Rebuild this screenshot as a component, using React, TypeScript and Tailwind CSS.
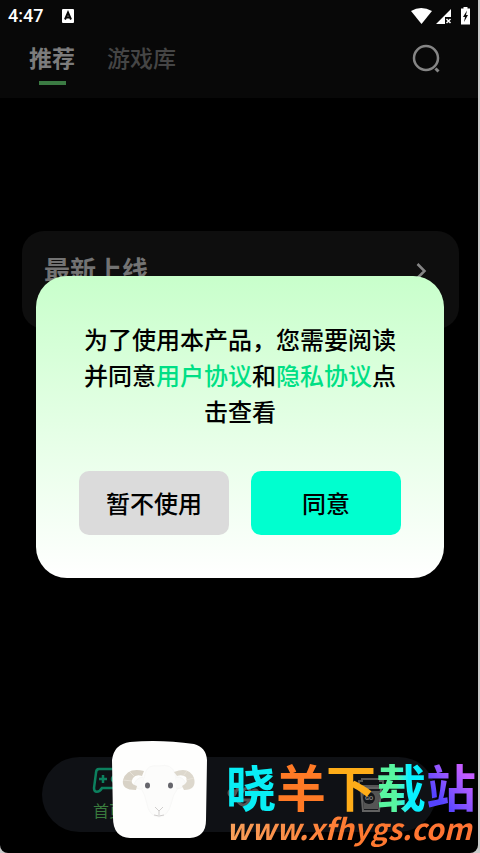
import React from "react";

const cjk = "font-['Noto_Sans_CJK_SC',sans-serif]";

function StatusBar() {
  return (
    <div className="flex h-8 items-center justify-between pr-2 pl-2">
      <div className="flex items-center gap-4">
        <span className="font-['Roboto',sans-serif] text-lg leading-8 font-medium text-white">4:47</span>
        <svg width="16" height="14" viewBox="0 0 16 14" aria-hidden="true">
          <rect x="3" width="12" height="14" rx="1" fill="#fff" />
          <path d="M6 10.500 9 3.500 12 10.500M7 8.500h4" stroke="#080808" strokeWidth="2" fill="none" />
        </svg>
      </div>
      <svg width="60" height="20" viewBox="0 0 60 20" aria-hidden="true">
        <path d="M1 5Q11-1 22 5L11.500 18Z" fill="#fff" />
        <path d="M26 18 41 3V11H35V18Z" fill="#fff" />
        <path d="m36.500 13 4 4m0-4-4 4" stroke="#fff" strokeWidth="1.500" />
        <path d="M51 2.500H53.500V1h4v1.500H60V18.500H51Z" fill="#fff" />
        <path d="M57 4.500 53 11H55l-1 5 4-7H56Z" fill="#080808" />
      </svg>
    </div>
  );
}

function Header() {
  return (
    <header className="h-[98px] bg-[#080808]">
      <StatusBar />
      <div className="flex items-start justify-between pt-2 pr-9 pl-[29px]">
        <nav className="flex gap-8 text-[23px] leading-[34px]">
          <button className="flex flex-col items-center font-bold text-[#7c7c7c]">
            推荐
            <span className="mt-[7px] h-1 w-[27px] bg-[#3b7b43]" />
          </button>
          <button className="self-start font-medium text-[#454545]">游戏库</button>
        </nav>
        <button aria-label="搜索" className="mt-1">
          <svg width="30" height="30" viewBox="0 0 30 30" fill="none" stroke="#858585" aria-hidden="true">
            <circle cx="14" cy="14" r="12" strokeWidth="2.500" />
            <path d="m23.500 24.500 3 3" strokeWidth="3" />
          </svg>
        </button>
      </div>
    </header>
  );
}

function LatestCard() {
  return (
    <section className="mt-[133px] mr-[19px] ml-[22px] flex h-[98px] items-start justify-between rounded-[22px] bg-[#0e0e0e] pt-5 pr-8 pl-[22px]">
      <h2 className="text-[26px] leading-9 font-bold text-[#737373]">最新上线</h2>
      <svg className="mt-3" width="11" height="16" viewBox="0 0 11 16" fill="none" stroke="#858585" strokeWidth="2.500" aria-hidden="true">
        <path d="m1.500 1 7 7-7 7" />
      </svg>
    </section>
  );
}

function BottomNav() {
  return (
    <nav className="mx-[42px] mb-[21px] flex h-[75px] items-center justify-between rounded-full bg-[#0f1115] pr-[52px] pl-[50px]">
      <button className="flex flex-col items-center text-base leading-6 text-[#397b3d]">
        <svg width="34" height="27" viewBox="0 0 34 27" fill="none" stroke="#0c805e" strokeWidth="2.500" aria-hidden="true">
          <path d="M7 2h20c3 0 4 2 4 4l2 15c0 5-5 4-7 0H10c-3 5-8 5-8 0L4 6c0-3 1-4 3-4ZM11 8v8m-4-4h8" />
          <circle cx="23" cy="12" r="3" />
        </svg>
        <span className="pt-1">首页</span>
      </button>
      <button aria-label="游戏" className="ml-1">
        <svg width="34" height="28" viewBox="0 0 34 28" fill="none" stroke="#555" strokeWidth="3" aria-hidden="true">
          <circle cx="5" cy="12" r="3" />
          <circle cx="28" cy="12" r="3" />
          <path d="M8 13q3-9 8-3 5-7 9 3M10 19q6 10 13 0Z" />
        </svg>
      </button>
      <button aria-label="福利">
        <svg width="26" height="36" viewBox="0 0 26 36" aria-hidden="true">
          <path d="M4 4V2h18v2h3v5H1V4Z" fill="none" stroke="#555" strokeWidth="2" />
          <path d="M3 11h20l-2 23H5Z" fill="#17181c" stroke="#626262" strokeWidth="2" />
          <path d="M4 14h18l-2 18H6Z" fill="#555" />
          <circle cx="11" cy="21" r="6" fill="#14161a" />
          <text x="11" y="23" textAnchor="middle" fontFamily="Roboto" fontSize="6" fontWeight="700" fill="#888">GO</text>
        </svg>
      </button>
    </nav>
  );
}

function ConsentDialog() {
  return (
    <div className="absolute inset-0 flex items-center justify-center px-9">
      <div role="dialog" aria-modal="true" className="w-full rounded-[31px] bg-linear-to-b from-[#c8ffcb] to-white px-[43px] pt-[45px] pb-[43px] text-black">
        <p className="px-1 text-center text-2xl leading-9 font-medium">
          为了使用本产品，您需要阅读并同意<a href="#terms" className="text-[#00df85]">用户协议</a>和<a href="#privacy" className="text-[#00df85]">隐私协议</a>点击查看
        </p>
        <div className="mt-[42px] flex gap-[22px] text-2xl font-medium">
          <button className="h-16 flex-1 rounded-[10px] bg-[#dbdbdb]">暂不使用</button>
          <button className="h-16 flex-1 rounded-[10px] bg-[#00ffcf]">同意</button>
        </div>
      </div>
    </div>
  );
}

function SheepLogo() {
  return (
    <svg width="96" height="99" viewBox="0 0 96 99" aria-hidden="true">
      <path d="M18 2Q48-1 82 4 94 7 95 20L94 80Q94 97 78 98H18Q1 97 1 78L0 20Q2 4 18 2Z" fill="#fefefd" />
      <path d="M33 34Q35 24 47 26 60 23 63 34L66 48Q61 54 59 64 56 76 47 77 37 76 35 64 33 54 29 48Z" fill="#fcfcfb" stroke="#f8f8f7" />
      <path d="M31 37Q23 38 22 46 28 51 31 48M64 37Q72 36 74 45 67 50 64 48" fill="#fafaf9" stroke="#f6f6f4" />
      <path d="M32 31Q15 27 11 40 9 50 24 50L25 46Q17 44 21 38 24 34 30 36Z" fill="#d8d2c6" />
      <path d="M62 32Q77 26 82 38 85 50 72 50L70 46Q77 43 74 37 70 34 65 36Z" fill="#ddd8cd" />
      <path d="M11 40 20 41M18 32 23 37M82 38 74 40M75 31 71 36" stroke="#e7e2d8" />
      <ellipse cx="35.500" cy="45.500" rx="2.500" ry="3" fill="#65656b" />
      <ellipse cx="58.500" cy="45.500" rx="2.500" ry="3" fill="#65656b" />
      <path d="m43 67 4 4 4-4M47 71v4m-5 0q5 2 10 0" fill="none" stroke="#d0cecd" />
    </svg>
  );
}

function Watermark() {
  return (
    <div className="pointer-events-none absolute right-0 bottom-0 flex items-end gap-[18px] pr-1">
      <div className="pb-[14px]">
        <SheepLogo />
      </div>
      <div className="w-[250px] pb-3">
        <div className="flex text-[50px] leading-[56px] font-bold">
          <span className="text-[#08eef5]">晓</span>
          <span className="text-[#ff7a25]">羊</span>
          <span className="text-[#ffad18]">下</span>
          <span className="bg-linear-to-r from-[#58f6a0] from-40% to-[#08f0ff] to-65% bg-clip-text text-transparent">载</span>
          <span className="bg-linear-to-tr from-[#5543ff] from-25% to-[#c45cff] to-75% bg-clip-text text-transparent">站</span>
        </div>
        <div className="text-[29px] leading-7 font-bold italic">
          <span className="bg-linear-to-r from-[#f7a05a] via-[#ff7a30] to-[#ff7233] bg-clip-text pr-1 text-transparent">www.xfhygs.com</span>
        </div>
      </div>
    </div>
  );
}

export default function App() {
  return (
    <div className={`relative flex min-h-screen flex-col bg-[#c9c9c9] pr-[2px] ${cjk}`}>
      <main className="flex flex-1 flex-col overflow-hidden rounded-b-lg bg-black">
        <Header />
        <LatestCard />
        <div className="flex-1" />
        <BottomNav />
      </main>
      <ConsentDialog />
      <Watermark />
    </div>
  );
}
